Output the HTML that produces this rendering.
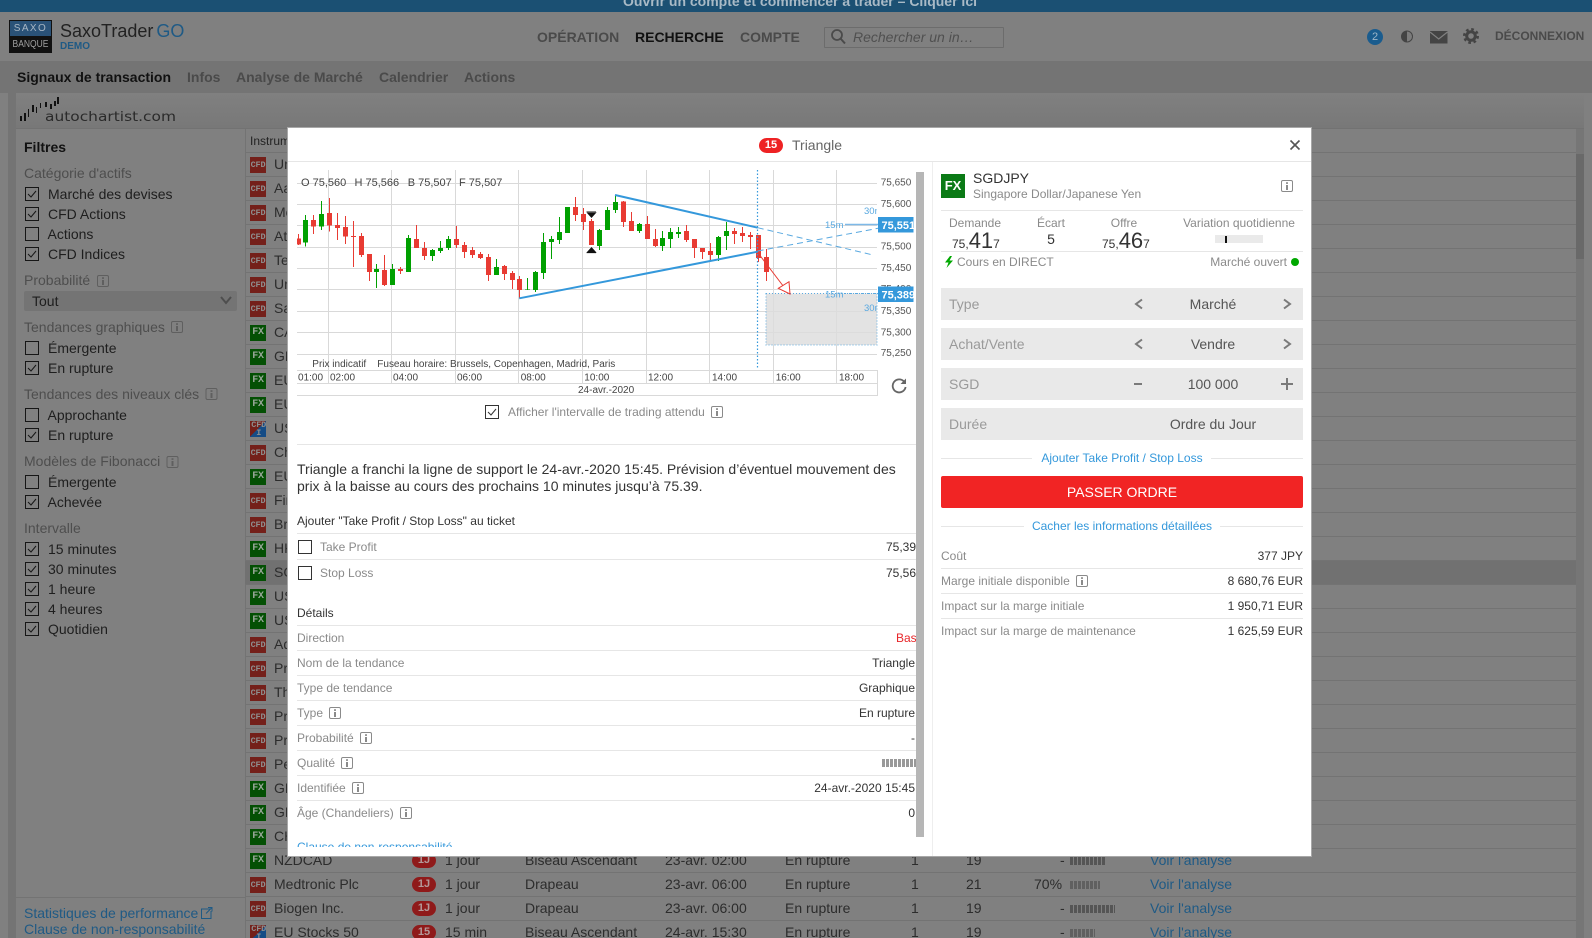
<!DOCTYPE html>
<html lang="fr">
<head>
<meta charset="utf-8">
<title>SaxoTraderGO</title>
<style>
html,body{margin:0;padding:0;width:1592px;height:938px;overflow:hidden;background:#808080;font-family:"Liberation Sans",Arial,sans-serif;}
.t{position:absolute;white-space:nowrap;line-height:16px;height:16px;}
.a{position:absolute;}
.b{font-weight:bold;}
.h{font-size:14px;color:#4e4e4e;left:24px;}
.i{font-size:14px;color:#1e1e1e;left:48px;}
.g12{font-size:12px;color:#8a8a8a;}
.d12{font-size:12px;color:#333;}
.ln{position:absolute;height:1px;background:#e6e6e6;}
.r{position:relative;height:24px;box-sizing:border-box;border-top:1px solid #737373;font-size:14px;color:#2c2c2c;line-height:23px;white-space:nowrap;}
.r s{position:absolute;left:5px;top:4px;width:16px;height:16px;text-decoration:none;text-align:center;font:bold 8.5px/16px "Liberation Mono",monospace;color:#8e8e8e;letter-spacing:-.2px;}
.c s{background:#74201a;}
.f s{background:#045004;color:#9aa89a;font-size:10px;}
.m s{background:linear-gradient(135deg,#74201a 50%,#154c86 50%);line-height:8px;text-align:right;}
.r span{position:absolute;top:0;}
.r u{position:absolute;left:29px;text-decoration:none;}
.bd{position:absolute;left:167px;top:4px;width:24px;height:15px;border-radius:8px;background:#8f1a1a;color:#b39a9a;font:bold 11px/15px "Liberation Sans",sans-serif;text-align:center;}
.lk{color:#1f5a85;}
.fr{position:absolute;left:941px;width:362px;height:32px;background:#e9e9e9;}
.fr b{position:absolute;left:8px;top:0;font-weight:normal;font-size:14px;line-height:32px;color:#9a9a9a;}
.fr i{position:absolute;width:200px;margin-left:-100px;text-align:center;font-style:normal;top:0;font-size:14px;line-height:32px;color:#555;}
.bar{position:absolute;height:8px;background:repeating-linear-gradient(90deg,#555 0 3px,#808080 3px 4px);}
</style>
</head>
<body>
<!-- top banner -->
<div class="a" style="left:0;top:0;width:1592px;height:12px;background:#1b5073;overflow:hidden">
<div class="t b" style="left:0;width:1600px;text-align:center;top:-7px;font-size:14px;color:#a9bac6">Ouvrir un compte et commencer à trader – Cliquer ici</div>
</div>
<!-- header -->
<div class="a" style="left:9px;top:20px;width:43px;height:33px;background:#111;overflow:hidden">
<div class="a" style="left:1px;top:1px;width:41px;height:15px;background:#2a5278;color:#a8b6c4;font-size:10px;line-height:15px;text-align:center;letter-spacing:1.4px">SAXO</div>
<div class="a" style="left:0;top:17px;width:43px;height:15px;color:#a0a0a0;font-size:10px;line-height:15px;text-align:center;transform:scaleX(.85)">BANQUE</div>
</div>
<div class="t" style="left:60px;top:21px;height:20px;line-height:20px;font-size:18px;color:#222;">SaxoTrader<span style="color:#1f5a85;margin-left:3px;">GO</span></div>
<div class="t b" style="left:60px;top:39px;font-size:10px;color:#1f5a85">DEMO</div>
<div class="t b" style="left:537px;top:29px;font-size:14px;color:#4a4a4a">OPÉRATION</div>
<div class="t b" style="left:635px;top:29px;font-size:14px;color:#111">RECHERCHE</div>
<div class="t b" style="left:740px;top:29px;font-size:14px;color:#4a4a4a">COMPTE</div>
<div class="a" style="left:824px;top:27px;width:178px;height:19px;border:1px solid #6c6c6c;border-radius:1px"></div>
<div class="t" style="left:853px;top:29px;font-size:14px;font-style:italic;color:#505050">Rechercher un in…</div>
<div class="a" style="left:1367px;top:29px;width:16px;height:16px;border-radius:8px;background:#1a5c8e;color:#9db6c9;font-size:11px;line-height:16px;text-align:center">2</div>
<div class="t b" style="left:1495px;top:28px;font-size:12px;color:#4a4a4a">DÉCONNEXION</div>
<!-- tabs -->
<div class="a" style="left:0;top:61px;width:1592px;height:32px;background:#747474"></div>
<div class="t b" style="left:17px;top:69px;font-size:14px;color:#111">Signaux de transaction</div>
<div class="t b" style="left:187px;top:69px;font-size:14px;color:#4a4a4a">Infos</div>
<div class="t b" style="left:236px;top:69px;font-size:14px;color:#4a4a4a">Analyse de Marché</div>
<div class="t b" style="left:379px;top:69px;font-size:14px;color:#4a4a4a">Calendrier</div>
<div class="t b" style="left:464px;top:69px;font-size:14px;color:#4a4a4a">Actions</div>
<!-- content frame -->
<div class="a" style="left:8px;top:93px;width:8px;height:845px;background:#747474"></div>
<div class="a" style="left:16px;top:93px;width:1568px;height:35px;background:linear-gradient(#808080,#787878)"></div>
<div class="a" style="left:16px;top:128px;width:1568px;height:1px;background:#727272"></div>
<div class="a" style="left:245px;top:129px;width:1px;height:809px;background:#737373"></div>
<div class="a" style="left:1576px;top:129px;width:8px;height:809px;background:#767676"></div>
<div class="a" style="left:1576px;top:154px;width:8px;height:105px;background:#696969"></div>
<div class="a" style="left:16px;top:897px;width:229px;height:1px;background:#737373"></div>
<!-- sidebar -->
<div class="t b" style="left:24px;top:139px;font-size:14px;color:#111">Filtres</div>
<div class="t h" style="top:165px">Catégorie d'actifs</div>
<div class="t i" style="top:186px">Marché des devises</div>
<div class="t i" style="top:206px">CFD Actions</div>
<div class="t i" style="top:226px;left:47.5px">Actions</div>
<div class="t i" style="top:246px">CFD Indices</div>
<div class="t h" style="top:272px">Probabilité</div>
<div class="a" style="left:24px;top:291px;width:213px;height:20px;background:#747474;border-radius:2px"></div>
<div class="t i" style="top:293px;left:32px">Tout</div>
<div class="t h" style="top:319px">Tendances graphiques</div>
<div class="t i" style="top:340px">Émergente</div>
<div class="t i" style="top:360px">En rupture</div>
<div class="t h" style="top:386px">Tendances des niveaux clés</div>
<div class="t i" style="top:407px;left:47.5px">Approchante</div>
<div class="t i" style="top:427px">En rupture</div>
<div class="t h" style="top:453px">Modèles de Fibonacci</div>
<div class="t i" style="top:474px">Émergente</div>
<div class="t i" style="top:494px;left:47.5px">Achevée</div>
<div class="t h" style="top:520px">Intervalle</div>
<div class="t i" style="top:541px">15 minutes</div>
<div class="t i" style="top:561px">30 minutes</div>
<div class="t i" style="top:581px">1 heure</div>
<div class="t i" style="top:601px">4 heures</div>
<div class="t i" style="top:621px">Quotidien</div>
<div class="t lk" style="left:24px;top:905px;font-size:14px">Statistiques de performance</div>
<div class="t lk" style="left:24px;top:921px;font-size:14px">Clause de non-responsabilité</div>
<!-- table -->
<div class="t" style="left:250px;top:133px;font-size:12px;color:#222">Instrument</div>
<div class="a" style="left:245px;top:152px;width:1331px;height:786px;overflow:hidden">
<div class="r c"><s>CFD</s><u>Unilever</u></div>
<div class="r c"><s>CFD</s><u>Aalberts</u></div>
<div class="r c"><s>CFD</s><u>Merck</u></div>
<div class="r c"><s>CFD</s><u>Atos</u></div>
<div class="r c"><s>CFD</s><u>Tesco</u></div>
<div class="r c"><s>CFD</s><u>United</u></div>
<div class="r c"><s>CFD</s><u>Sanofi</u></div>
<div class="r f"><s>FX</s><u>CADJPY</u></div>
<div class="r f"><s>FX</s><u>GBPUSD</u></div>
<div class="r f"><s>FX</s><u>EURUSD</u></div>
<div class="r f"><s>FX</s><u>EURJPY</u></div>
<div class="r m"><s>CFD<br>I&nbsp;</s><u>US 500</u></div>
<div class="r c"><s>CFD</s><u>Chevron</u></div>
<div class="r f"><s>FX</s><u>EURGBP</u></div>
<div class="r c"><s>CFD</s><u>First</u></div>
<div class="r c"><s>CFD</s><u>Brenntag</u></div>
<div class="r f"><s>FX</s><u>HKDJPY</u></div>
<div class="r f" style="background:#717171"><s>FX</s><u>SGDJPY</u></div>
<div class="r f"><s>FX</s><u>USDJPY</u></div>
<div class="r f"><s>FX</s><u>USDCAD</u></div>
<div class="r c"><s>CFD</s><u>Adobe</u></div>
<div class="r c"><s>CFD</s><u>Prada</u></div>
<div class="r c"><s>CFD</s><u>Thales</u></div>
<div class="r c"><s>CFD</s><u>Prosus</u></div>
<div class="r c"><s>CFD</s><u>Prysmian</u></div>
<div class="r c"><s>CFD</s><u>Pernod</u></div>
<div class="r f"><s>FX</s><u>GBPJPY</u></div>
<div class="r f"><s>FX</s><u>GBPCAD</u></div>
<div class="r f"><s>FX</s><u>CHFJPY</u></div>
<div class="r f"><s>FX</s><u>NZDCAD</u><div class="bd">1J</div><span style="left:200px">1 jour</span><span style="left:280px">Biseau Ascendant</span><span style="left:420px">23-avr. 02:00</span><span style="left:540px">En rupture</span><span style="left:666px">1</span><span style="left:721px">19</span><span style="left:815px">-</span><div class="bar" style="left:825px;top:8px;width:35px"></div><span class="lk" style="left:905px">Voir l'analyse</span></div>
<div class="r c"><s>CFD</s><u>Medtronic Plc</u><div class="bd">1J</div><span style="left:200px">1 jour</span><span style="left:280px">Drapeau</span><span style="left:420px">23-avr. 06:00</span><span style="left:540px">En rupture</span><span style="left:666px">1</span><span style="left:721px">21</span><span style="left:789px">70%</span><div class="bar" style="left:825px;top:8px;width:30px;opacity:.75"></div><span class="lk" style="left:905px">Voir l'analyse</span></div>
<div class="r c"><s>CFD</s><u>Biogen Inc.</u><div class="bd">1J</div><span style="left:200px">1 jour</span><span style="left:280px">Drapeau</span><span style="left:420px">23-avr. 06:00</span><span style="left:540px">En rupture</span><span style="left:666px">1</span><span style="left:721px">19</span><span style="left:815px">-</span><div class="bar" style="left:825px;top:8px;width:45px"></div><span class="lk" style="left:905px">Voir l'analyse</span></div>
<div class="r m"><s>CFD<br>I&nbsp;</s><u>EU Stocks 50</u><div class="bd">15</div><span style="left:200px">15 min</span><span style="left:280px">Biseau Ascendant</span><span style="left:420px">24-avr. 15:30</span><span style="left:540px">En rupture</span><span style="left:666px">1</span><span style="left:721px">19</span><span style="left:815px">-</span><div class="bar" style="left:825px;top:8px;width:25px;opacity:.75"></div><span class="lk" style="left:905px">Voir l'analyse</span></div>
</div>

<!-- modal -->
<div class="a" style="left:288px;top:128px;width:1023px;height:728px;background:#fff;box-shadow:0 0 0 1px #a8a8a8"></div>
<div class="ln" style="left:288px;top:161px;width:1023px"></div>
<div class="a" style="left:932px;top:162px;width:1px;height:694px;background:#eee"></div>
<div class="a" style="left:759px;top:138px;width:24px;height:15px;border-radius:8px;background:#ee2224;color:#fff;font:bold 11px/15px 'Liberation Sans',sans-serif;text-align:center">15</div>
<div class="t" style="left:792px;top:137px;font-size:14px;color:#666">Triangle</div>
<div class="a" style="left:916px;top:172px;width:8px;height:665px;background:#b6b6b6"></div>

<!-- left pane -->
<div class="a" style="left:0;top:0;width:916px;height:847px;overflow:hidden">
<div class="t g12" style="left:508px;top:404px;color:#8a8a8a">Afficher l'intervalle de trading attendu</div>
<div class="ln" style="left:297px;top:444px;width:619px"></div>
<div class="a" style="left:297px;top:461px;width:612px;font-size:14px;line-height:16.7px;color:#333">Triangle a franchi la ligne de support le 24-avr.-2020 15:45. Prévision d’éventuel mouvement des prix à la baisse au cours des prochains 10 minutes jusqu’à 75.39.</div>
<div class="t d12" style="left:297px;top:513px">Ajouter "Take Profit / Stop Loss" au ticket</div>
<div class="ln" style="left:297px;top:533px;width:619px"></div>
<div class="t g12" style="left:320px;top:539px">Take Profit</div>
<div class="t d12" style="left:886px;top:539px">75,390</div>
<div class="ln" style="left:297px;top:559px;width:619px"></div>
<div class="t g12" style="left:320px;top:565px">Stop Loss</div>
<div class="t d12" style="left:886px;top:565px">75,560</div>
<div class="t d12" style="left:297px;top:605px">Détails</div>
<div class="ln" style="left:297px;top:625px;width:619px"></div>
<div class="t g12" style="left:297px;top:630px">Direction</div>
<div class="t" style="left:896px;top:630px;font-size:12px;color:#e8262a">Bas</div>
<div class="ln" style="left:297px;top:650px;width:619px"></div>
<div class="t g12" style="left:297px;top:655px">Nom de la tendance</div>
<div class="t d12" style="right:1px;top:655px">Triangle</div>
<div class="ln" style="left:297px;top:675px;width:619px"></div>
<div class="t g12" style="left:297px;top:680px">Type de tendance</div>
<div class="t d12" style="right:1px;top:680px">Graphique</div>
<div class="ln" style="left:297px;top:700px;width:619px"></div>
<div class="t g12" style="left:297px;top:705px">Type</div>
<div class="t d12" style="right:1px;top:705px">En rupture</div>
<div class="ln" style="left:297px;top:725px;width:619px"></div>
<div class="t g12" style="left:297px;top:730px">Probabilité</div>
<div class="t d12" style="right:1px;top:730px">-</div>
<div class="ln" style="left:297px;top:750px;width:619px"></div>
<div class="t g12" style="left:297px;top:755px">Qualité</div>
<div class="a" style="left:882px;top:759px;width:34px;height:8px;background:repeating-linear-gradient(90deg,#999 0 3px,#fff 3px 4px)"></div>
<div class="ln" style="left:297px;top:775px;width:619px"></div>
<div class="t g12" style="left:297px;top:780px">Identifiée</div>
<div class="t d12" style="right:1px;top:780px">24-avr.-2020 15:45</div>
<div class="ln" style="left:297px;top:800px;width:619px"></div>
<div class="t g12" style="left:297px;top:805px">Âge (Chandeliers)</div>
<div class="t d12" style="right:1px;top:805px">0</div>
<div class="t" style="left:297px;top:839px;font-size:12px;color:#3498db">Clause de non-responsabilité</div>
</div>

<!-- right pane -->
<div class="a" style="left:941px;top:174px;width:24px;height:24px;background:#0b7a16;color:#fff;font:bold 13px/24px 'Liberation Sans',sans-serif;text-align:center">FX</div>
<div class="t" style="left:973px;top:170px;font-size:14px;color:#333">SGDJPY</div>
<div class="t g12" style="left:973px;top:186px">Singapore Dollar/Japanese Yen</div>
<div class="ln" style="left:941px;top:210px;width:362px"></div>
<div class="t g12" style="left:925px;width:100px;text-align:center;top:215px">Demande</div>
<div class="t g12" style="left:1001px;width:100px;text-align:center;top:215px">Écart</div>
<div class="t g12" style="left:1074px;width:100px;text-align:center;top:215px">Offre</div>
<div class="t g12" style="left:1169px;width:140px;text-align:center;top:215px">Variation quotidienne</div>
<div class="t" style="left:952px;top:231px;height:20px;line-height:20px;font-size:12px;color:#333">75,<span style="font-size:22px;">41</span>7</div>
<div class="t" style="left:1001px;width:100px;text-align:center;top:231px;font-size:14px;color:#333">5</div>
<div class="t" style="left:1102px;top:231px;height:20px;line-height:20px;font-size:12px;color:#333">75,<span style="font-size:22px;">46</span>7</div>
<div class="a" style="left:1215px;top:235px;width:48px;height:8px;background:#eaeaea"></div>
<div class="a" style="left:1225px;top:236px;width:2px;height:7px;background:#111"></div>
<div class="ln" style="left:941px;top:251px;width:362px"></div>
<div class="t g12" style="left:957px;top:254px">Cours en DIRECT</div>
<div class="t g12" style="right:305px;top:254px">Marché ouvert</div>
<div class="a" style="left:1291px;top:258px;width:8px;height:8px;border-radius:4px;background:#00a800"></div>
<div class="fr" style="top:288px"><b>Type</b><i style="left:272px">Marché</i></div>
<div class="fr" style="top:328px"><b>Achat/Vente</b><i style="left:272px">Vendre</i></div>
<div class="fr" style="top:368px"><b>SGD</b><i style="left:272px">100 000</i></div>
<div class="fr" style="top:408px"><b>Durée</b><i style="left:272px">Ordre du Jour</i></div>
<div class="ln" style="left:941px;top:458px;width:91px"></div>
<div class="ln" style="left:1211px;top:458px;width:92px"></div>
<div class="t" style="left:941px;width:362px;text-align:center;top:450px;font-size:12px;color:#3498db">Ajouter Take Profit / Stop Loss</div>
<div class="a" style="left:941px;top:476px;width:362px;height:32px;background:#f12424;border-radius:2px;color:#fff;font-size:14px;line-height:32px;text-align:center">PASSER ORDRE</div>
<div class="ln" style="left:941px;top:526px;width:83px"></div>
<div class="ln" style="left:1220px;top:526px;width:83px"></div>
<div class="t" style="left:941px;width:362px;text-align:center;top:518px;font-size:12px;color:#3498db">Cacher les informations détaillées</div>
<div class="t g12" style="left:941px;top:548px">Coût</div>
<div class="t d12" style="right:289px;top:548px">377 JPY</div>
<div class="ln" style="left:941px;top:568px;width:362px"></div>
<div class="t g12" style="left:941px;top:573px">Marge initiale disponible</div>
<div class="t d12" style="right:289px;top:573px">8 680,76 EUR</div>
<div class="ln" style="left:941px;top:593px;width:362px"></div>
<div class="t g12" style="left:941px;top:598px">Impact sur la marge initiale</div>
<div class="t d12" style="right:289px;top:598px">1 950,71 EUR</div>
<div class="ln" style="left:941px;top:618px;width:362px"></div>
<div class="t g12" style="left:941px;top:623px">Impact sur la marge de maintenance</div>
<div class="t d12" style="right:289px;top:623px">1 625,59 EUR</div>

<!-- chart + icons overlay -->
<svg class="a" style="left:0;top:0" width="1592" height="938" viewBox="0 0 1592 938" font-family="'Liberation Sans',Arial,sans-serif">
<defs>
<symbol id="ii" viewBox="0 0 12 12"><rect x=".5" y=".5" width="11" height="11" rx="1.5" fill="none" stroke="currentColor"/><path d="M5 5h2v5H5zM5 2.3h2v1.6H5z" fill="currentColor"/></symbol>
<symbol id="cb" viewBox="0 0 14 14"><rect x=".5" y=".5" width="13" height="13" fill="none" stroke="currentColor"/></symbol>
<symbol id="ck" viewBox="0 0 14 14"><rect x=".5" y=".5" width="13" height="13" fill="none" stroke="currentColor"/><path d="M3 7l3 3 5-6" fill="none" stroke="currentColor"/></symbol>
<clipPath id="cp"><rect x="297" y="170" width="600" height="210"/></clipPath>
<clipPath id="cl"><rect x="878" y="210" width="35.5" height="100"/></clipPath>
<clipPath id="c3"><rect x="800" y="200" width="77" height="120"/></clipPath>
</defs>

<!-- grid -->
<g stroke="#d9d9d9" stroke-width="1" shape-rendering="crispEdges" fill="none">
<path d="M297 183.5H877M297 204.5H877M297 225.5H877M297 247.5H877M297 268.5H877M297 289.5H877M297 311.5H877M297 332.5H877M297 354.5H877M297 370.5H877M297 383.5H877M297 395.5H877M877.5 370V396"/>
<path d="M328.5 170V383M391.5 170V383M455.5 170V383M518.5 170V383M582.5 170V383M646.5 170V383M709.5 170V383M773.5 170V383M836.5 170V383"/>
</g>
<rect x="766" y="293.5" width="111" height="51.5" fill="#dcdcdc" fill-opacity=".8" stroke="#5aa9e0" stroke-dasharray="1 2" shape-rendering="crispEdges"/>

<!-- candles -->
<g clip-path="url(#cp)" shape-rendering="crispEdges" fill="none">
<g transform="translate(285 125) scale(.33333)">
<path stroke="#e83b33" stroke-width="3" d="M40 327V360M85 270V327M133 219V320M157 264V345M181 273V357M205 288V426M229 324V396M253 387V468M298 390V483M346 426V447M394 300V369M418 351V405M514 303V369M538 351V399M562 366V399M586 381V402M610 387V468M658 420V465M682 438V492M703 453V520M871 216V288M895 249V315M919 282V360M1015 228V306"/>
<path stroke="#e83b33" stroke-width="15" d="M40 340V358M85 285V305M133 264V302M157 300V309M181 306V335M205 333V336M229 333V390M253 387V441M298 435V480M346 432V438M394 342V369M418 369V393M514 342V360M538 360V381M562 375V390M586 387V399M610 396V450M658 423V447M682 444V465M703 462V495M871 246V270M895 267V291M919 288V360M1015 230V291"/>
<path stroke="#00a000" stroke-width="3" d="M61 270V365M109 228V315M274 417V489M322 417V480M370 330V441M442 372V408M466 348V384M490 333V375M634 402V450M727 459V495M751 438V501M775 324V462M799 333V402M823 276V357M847 246V324M943 312V375M967 246V315M991 213V264"/>
<path stroke="#00a000" stroke-width="15" d="M61 285V353M109 267V305M274 432V441M322 432V480M370 339V441M442 375V393M466 369V378M490 342V369M634 426V450M727 493V495M751 441V495M775 351V444M799 342V351M823 321V345M847 246V324M943 315V363M967 255V315M991 231V255"/>
</g>
<g transform="translate(620 125) scale(.33333)">
<path stroke="#e83b33" stroke-width="3" d="M34 261V318M82 273V342M106 312V366M199 300V351M223 342V399M247 369V402M271 354V408M343 309V357M367 306V351M391 321V372M415 330V411M439 372V468"/>
<path stroke="#e83b33" stroke-width="15" d="M34 288V318M82 297V342M106 342V363M199 318V345M223 342V369M247 369V381M271 378V390M343 318V327M367 324V333M391 330V336M415 330V399M439 396V441"/>
<path stroke="#00a000" stroke-width="3" d="M58 294V324M127 318V378M151 309V369M175 306V339M295 333V408M319 291V375"/>
<path stroke="#00a000" stroke-width="15" d="M58 297V318M127 339V363M151 321V342M175 321V327M295 336V390M319 318V333"/>
</g>
</g>

<!-- trend lines -->
<path d="M615 195L757.7 227.7M519.3 298.3L757.7 251.7" stroke="#3498db" stroke-width="2" fill="none"/>
<path d="M757.7 227.7L873 255M757.7 251L878 228.3" stroke="#5aa9e0" stroke-width="1" stroke-dasharray="6 4" fill="none"/>
<path d="M757.5 170V368" stroke="#3498db" stroke-width="1.2" stroke-dasharray="1.5 2" fill="none"/>
<path d="M845 224.5H878" stroke="#7eb9e8" stroke-width="1.5"/>
<path d="M845 293.5H878" stroke="#5aa9e0" stroke-width="1" stroke-dasharray="1 1"/>
<path d="M758.3 253.3L788.5 293" stroke="#e83b33" stroke-width="1" fill="none"/>
<path d="M790 294L778.3 288.3L789 281.7Z" fill="#fff" stroke="#e83b33" stroke-width="1"/>
<!-- markers -->
<path d="M586.5 211.5H596M587 212.5h9l-4.500 5z" fill="#111" stroke="#111" stroke-width=".6"/>
<path d="M587 252.500h9l-4.500 -5zM586.500 252.800H596" fill="#111" stroke="#111" stroke-width=".6"/>

<!-- chart text -->
<g font-size="11" fill="#444">
<text x="301" y="186">O 75,560</text>
<text x="354.500" y="186">H 75,566</text>
<text x="407.700" y="186">B 75,507</text>
<text x="459" y="186">F 75,507</text>
</g>
<g font-size="10" fill="#444">
<text x="312.300" y="367">Prix indicatif</text>
<text x="377.300" y="367" textLength="238">Fuseau horaire: Brussels, Copenhagen, Madrid, Paris</text>
<text x="298" y="380.500">01:00</text><text x="330" y="380.500">02:00</text><text x="393" y="380.500">04:00</text><text x="457" y="380.500">06:00</text><text x="520.700" y="380.500">08:00</text><text x="584.300" y="380.500">10:00</text><text x="648" y="380.500">12:00</text><text x="712" y="380.500">14:00</text><text x="775.700" y="380.500">16:00</text><text x="839" y="380.500">18:00</text>
<text x="578" y="393">24-avr.-2020</text>
</g>
<g font-size="10" fill="#555">
<text x="880.700" y="185.500">75,650</text><text x="880.700" y="207">75,600</text><text x="880.700" y="249.500">75,500</text><text x="880.700" y="271">75,450</text><text x="880.700" y="292">75,400</text><text x="880.700" y="314">75,350</text><text x="880.700" y="335.500">75,300</text><text x="880.700" y="356">75,250</text>
</g>
<g font-size="9.500" fill="#5aa9e0">
<text x="825" y="228">15m</text><text x="825" y="297.500">15m</text>
<g clip-path="url(#c3)"><text x="864" y="214">30m</text><text x="864" y="311">30m</text></g>
</g>
<rect x="878" y="217" width="35.500" height="15.500" fill="#3498db"/>
<rect x="878" y="286.500" width="35.500" height="15.500" fill="#3498db"/>
<g clip-path="url(#cl)" font-size="11" font-weight="bold" fill="#fff"><text x="881.500" y="229">75,551</text><text x="881.500" y="298.500">75,389</text></g>

<!-- refresh -->
<path d="M904 381.500A6.500 6.500 0 1 0 905.600 387" fill="none" stroke="#666" stroke-width="1.800"/>
<path d="M906 378.500V384H900.500Z" fill="#666"/>

<!-- modal close -->
<path d="M1290.500 140.500l9 9M1299.500 140.500l-9 9" stroke="#555" stroke-width="1.600"/>

<!-- modal checkboxes -->
<use href="#ck" x="485" y="405" width="14" height="14" color="#333"/>
<use href="#cb" x="298" y="540" width="14" height="14" color="#333"/>
<use href="#cb" x="298" y="566" width="14" height="14" color="#333"/>

<!-- info icons modal -->
<g color="#8a8a8a">
<use href="#ii" x="711" y="406" width="12" height="12"/>
<use href="#ii" x="329" y="707" width="12" height="12"/>
<use href="#ii" x="360" y="732" width="12" height="12"/>
<use href="#ii" x="341" y="757" width="12" height="12"/>
<use href="#ii" x="352" y="782" width="12" height="12"/>
<use href="#ii" x="400" y="807" width="12" height="12"/>
<use href="#ii" x="1076" y="575" width="12" height="12"/>
<use href="#ii" x="1281" y="180" width="12" height="12"/>
</g>
<!-- right pane icons -->
<path d="M950 256L945 262.500H948.500L946.500 268L953 260.500H949.500L952 256Z" fill="#00a800"/>
<g fill="none" stroke="#7a7a7a" stroke-width="2">
<path d="M1142 299.500L1136 304L1142 308.500M1284 299.500L1290 304L1284 308.500"/>
<path d="M1142 339.500L1136 344L1142 348.500M1284 339.500L1290 344L1284 348.500"/>
<path d="M1134 384H1142M1281 384H1293M1287 378V390"/>
</g>

<!-- sidebar icons -->
<g color="#161616">
<use href="#ck" x="25" y="187" width="14" height="14"/>
<use href="#ck" x="25" y="207" width="14" height="14"/>
<use href="#cb" x="25" y="227" width="14" height="14"/>
<use href="#ck" x="25" y="247" width="14" height="14"/>
<use href="#cb" x="25" y="341" width="14" height="14"/>
<use href="#ck" x="25" y="361" width="14" height="14"/>
<use href="#cb" x="25" y="408" width="14" height="14"/>
<use href="#ck" x="25" y="428" width="14" height="14"/>
<use href="#cb" x="25" y="475" width="14" height="14"/>
<use href="#ck" x="25" y="495" width="14" height="14"/>
<use href="#ck" x="25" y="542" width="14" height="14"/>
<use href="#ck" x="25" y="562" width="14" height="14"/>
<use href="#ck" x="25" y="582" width="14" height="14"/>
<use href="#ck" x="25" y="602" width="14" height="14"/>
<use href="#ck" x="25" y="622" width="14" height="14"/>
</g>
<g color="#5f5f5f">
<use href="#ii" x="97" y="275" width="12" height="12"/>
<use href="#ii" x="171" y="321" width="12" height="12"/>
<use href="#ii" x="205.500" y="388" width="12" height="12"/>
<use href="#ii" x="166.500" y="456" width="12" height="12"/>
</g>
<path d="M221 297L226 303L231 297" fill="none" stroke="#4e4e4e" stroke-width="2"/>
<path d="M210 909H201.500V918.500H211V911M206 913.500L212 907.500M208 907.500H212V911.500" fill="none" stroke="#1f5a85" stroke-width="1"/>

<!-- search icon -->
<circle cx="837" cy="35" r="5" fill="none" stroke="#4a4a4a" stroke-width="1.800"/>
<path d="M840.500 38.500L845 43.500" stroke="#4a4a4a" stroke-width="2"/>
<!-- contrast -->
<circle cx="1407" cy="36.500" r="5.500" fill="#7c7c7c" stroke="#444" stroke-width="1"/>
<path d="M1407 31A5.500 5.500 0 0 0 1407 42Z" fill="#444"/>
<!-- mail -->
<rect x="1430" y="31" width="17.500" height="12.500" fill="#444"/>
<path d="M1430 32L1438.700 39L1447.500 32" fill="none" stroke="#808080" stroke-width="1.200"/>
<!-- gear -->
<circle cx="1471" cy="36" r="4.300" fill="none" stroke="#444" stroke-width="3"/>
<circle cx="1471" cy="36" r="6.800" fill="none" stroke="#444" stroke-width="2.400" stroke-dasharray="2.670 2.670"/>

<!-- autochartist logo -->
<g fill="#111" shape-rendering="crispEdges">
<rect x="20" y="116" width="2" height="5"/><rect x="24" y="113" width="2" height="8"/><rect x="28" y="109" width="1" height="8"/><rect x="32" y="105" width="2" height="7"/><rect x="36" y="107" width="1" height="6"/><rect x="40" y="103" width="1" height="5"/><rect x="45" y="102" width="2" height="5"/><rect x="50" y="104" width="2" height="5"/><rect x="54" y="101" width="2" height="5"/><rect x="57" y="97" width="2" height="7"/>
</g>
<text x="45" y="121" font-size="13.500" font-family="'DejaVu Sans',sans-serif" fill="#2a2a2a" textLength="131" lengthAdjust="spacingAndGlyphs">autochartist.com</text>
</svg>
</body>
</html>
